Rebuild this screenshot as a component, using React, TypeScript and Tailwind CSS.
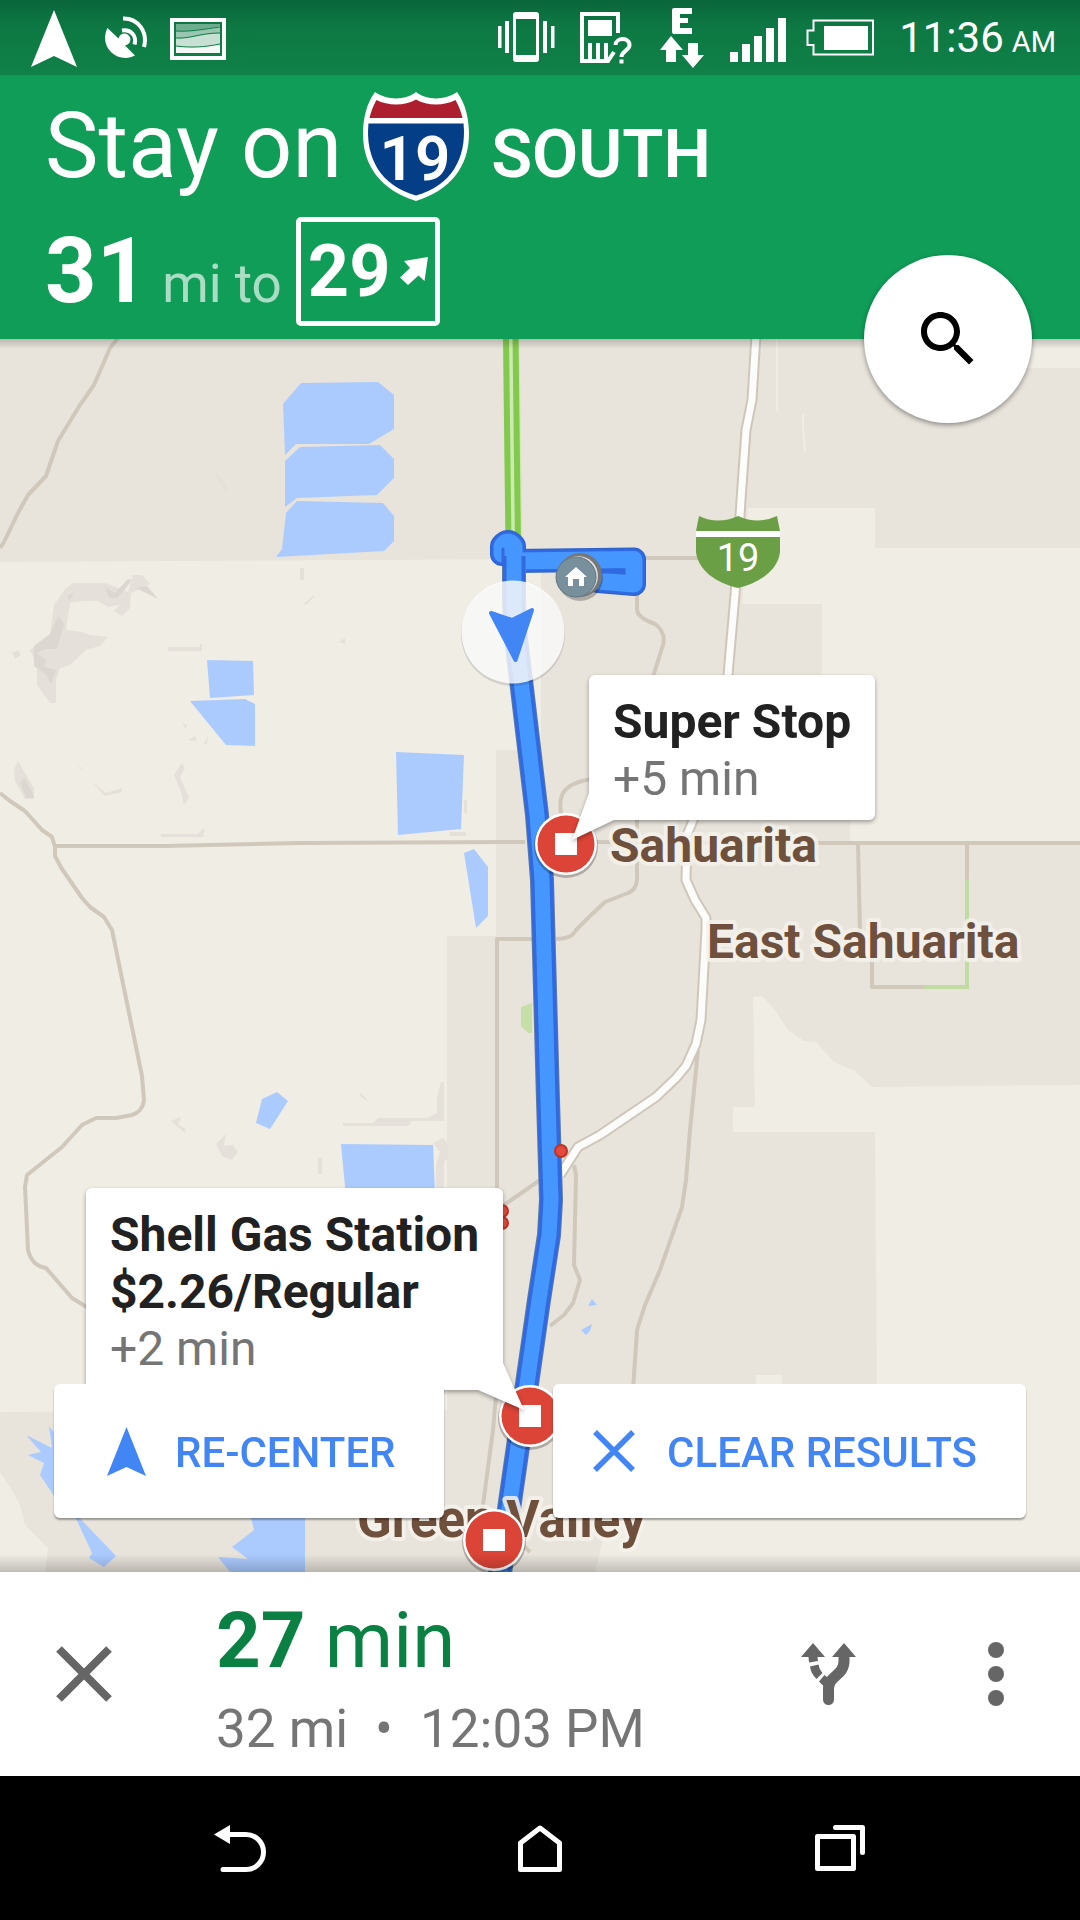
import React from "react";

const MAP_FONT = "Roboto, 'Noto Sans', sans-serif";

function StatusBar() {
  return (
    <div className="flex h-[75px] items-center bg-linear-to-b from-[#0a663b] via-[#0d7843] via-35% to-[#108148] pl-[31px] pr-6 text-white">
      <svg className="h-[75px] w-[46px]" viewBox="31 0 46 75" fill="currentColor" aria-hidden="true">
        <path d="M54 10 77 67 54 56 31 67Z" />
      </svg>
      <svg className="ml-7 h-[75px] w-[42px]" viewBox="105 0 42 75" aria-hidden="true">
        <path d="M107.500 28C103 37 105 46 111 52 117 58 127 60 135 55.500L125 45.500A6 6 0 1 0 118.500 38.500Z" fill="currentColor" />
        <path d="M122 30.500C131 29 137 36 134.500 44.500" fill="none" stroke="currentColor" strokeWidth="4" />
        <path d="M123 18.500C138 18 148 32 144 47" fill="none" stroke="currentColor" strokeWidth="4" />
      </svg>
      <svg className="ml-[23px] h-[75px] w-14" viewBox="170 0 56 75" aria-hidden="true">
        <rect x="172" y="20" width="52" height="38" fill="none" stroke="#fff" strokeWidth="4" />
        <path d="M176 24H220V53H176Z" fill="#fff" fillOpacity=".4" />
        <path d="M176 31C190 32 205 29 220 26V53H176Z" fill="#fff" fillOpacity=".3" />
        <path d="M176 38C190 39 200 34 220 33V53H176Z" fill="#fff" fillOpacity=".45" />
        <path d="M176 46C192 48 205 47 220 44V53H176Z" fill="#fff" fillOpacity=".8" />
        <path d="M176 31C190 32 205 29 220 27M176 38C190 39 200 33 220 33M176 46C192 48 205 47 220 44" fill="none" stroke="#0e7c45" strokeWidth="1" />
      </svg>
      <div className="min-w-4 flex-1" />
      <svg className="h-[75px] w-[57px]" viewBox="498 0 57 75" fill="currentColor" aria-hidden="true">
        <path d="M498 26h3.500v22H498zM505 21h4v32h-4zM543 21h4v32h-4zM551 26h3.500v22H551z" />
        <path fillRule="evenodd" d="M516 12h20a3 3 0 0 1 3 3v44a3 3 0 0 1-3 3h-20a3 3 0 0 1-3-3V15a3 3 0 0 1 3-3zm0 7v36h20V19z" />
      </svg>
      <svg className="ml-[25px] h-[75px] w-[52px]" viewBox="580 0 52 75" aria-hidden="true">
        <path d="M618 33V14H582V61H608L614 52" fill="none" stroke="#fff" strokeWidth="4" />
        <path d="M588 20h24v16h-24zM588 43h4v17h-4zM596 43h4v17h-4zM604 43h4v17h-4z" fill="#fff" />
        <path d="M615.500 45C616 37 630 37 629.500 45.500 629 50.500 621.500 51 621.500 57" fill="none" stroke="#fff" strokeWidth="4" />
        <path d="M619.500 59.500h4v4h-4z" fill="#fff" />
      </svg>
      <svg className="ml-7 h-[75px] w-11" viewBox="660 0 44 75" fill="currentColor" aria-hidden="true">
        <path d="M674 8h18v6h-12v4h8v5h-8v5h12v6h-18a2 2 0 0 1-2-2V10a2 2 0 0 1 2-2z" />
        <path d="M671 36 683 50H676V62H666V50H660ZM688 43H698V55H704L693 68 682 55H688Z" />
      </svg>
      <svg className="ml-[26px] h-[75px] w-14" viewBox="730 0 56 75" fill="currentColor" aria-hidden="true">
        <path d="M730 52h8v10h-8zM742 44h8v18h-8zM754 36h8v26h-8zM766 28h8v34h-8zM778 18h8v44h-8z" />
      </svg>
      <svg className="ml-5 h-[75px] w-[68px]" viewBox="806 0 68 75" aria-hidden="true">
        <path d="M813.500 20.500H873V54.500H813.500V45H807.500V30.500H813.500Z" fill="none" stroke="#fff" strokeWidth="2" />
        <path d="M824 26h44v24h-44z" fill="#fff" />
      </svg>
      <div className="ml-[25px] flex items-baseline gap-2 pt-1 leading-[50px]">
        <span className="text-[42px]">11:36</span>
        <span className="text-[29px]">AM</span>
      </div>
    </div>
  );
}

function InterstateShield() {
  return (
    <svg className="ml-[21px] h-[109px] w-[106px] self-start" viewBox="0 0 106 109" role="img" aria-label="Interstate 19">
      <path d="M12 0C23 8 42 9 53 0 64 9 83 8 94 0 103 12 106 28 106 42 106 74 88 98 53 109 18 98 0 74 0 42 0 28 3 12 12 0Z" fill="#fff" />
      <path d="M13.500 8C25 14 42 14 53 7.500 64 14 81 14 92.500 8 96 14 98 20 99.500 26H6.500C8 20 10 14 13.500 8Z" fill="#ad1f2e" />
      <path d="M5.500 31.500H100.500C104 66 88 94 53 103.500 18 94 2 66 5.500 31.500Z" fill="#033e86" />
      <text x="52" y="88" textAnchor="middle" fontFamily={MAP_FONT} fontSize="62" fontWeight="600" fill="#fff">19</text>
    </svg>
  );
}

function Directions() {
  return (
    <header className="relative bg-[#0f9d58] pb-[13px] pl-[45px] pr-56 pt-[17px] text-white">
      <div className="flex h-[109px] items-baseline whitespace-nowrap leading-[109px]">
        <h1 className="text-[90px]">Stay on</h1>
        <InterstateShield />
        <span className="ml-[22px] text-[67px] font-semibold">SOUTH</span>
      </div>
      <div className="mt-4 flex h-[109px] items-baseline whitespace-nowrap leading-[109px]">
        <span className="text-[90px] font-bold">31</span>
        <span className="ml-[14px] text-[53px] text-white/65">mi to</span>
        <div className="ml-[14px] flex h-[109px] items-center gap-[10px] self-start rounded-[5px] border-[5px] border-white px-[7px]">
          <span className="text-[72px] font-bold leading-[99px]">29</span>
          <svg className="mb-[2px] h-7 w-7" viewBox="0 0 28 28" fill="currentColor" aria-hidden="true">
            <path d="M28 0 24.500 24 18.500 18.500 8 28 0 20.500 10 11 4 4Z" />
          </svg>
        </div>
      </div>
      <button
        type="button"
        aria-label="Search along route"
        className="absolute -bottom-[84px] right-12 z-20 flex size-[168px] items-center justify-center rounded-full bg-white text-black shadow-[0_2px_5px_rgba(0,0,0,0.4)]"
      >
        <svg className="size-[72px]" viewBox="0 0 24 24" fill="currentColor" aria-hidden="true">
          <path d="M15.5 14h-.79l-.28-.27C15.41 12.59 16 11.11 16 9.5 16 5.91 13.09 3 9.5 3S3 5.91 3 9.5 5.91 16 9.5 16c1.61 0 3.09-.59 4.23-1.57l.27.28v.79l5 4.99L20.49 19l-4.99-5zm-6 0C7.01 14 5 11.99 5 9.5S7.01 5 9.5 5 14 7.01 14 9.5 11.99 14 9.5 14z" />
        </svg>
      </button>
    </header>
  );
}

function StopPin({ x, y }: { x: number; y: number }) {
  return (
    <g>
      <circle cx={x} cy={y + 2} r="32" fill="#000" fillOpacity=".25" />
      <circle cx={x} cy={y} r="31" fill="#fff" />
      <circle cx={x} cy={y} r="28.500" fill="#db4437" />
      <rect x={x - 11} y={y - 11} width="22" height="22" fill="#fff" />
    </g>
  );
}

function PlaceLabel({ x, y, size = 48, children }: { x: number; y: number; size?: number; children: React.ReactNode }) {
  return (
    <text x={x} y={y} fontFamily={MAP_FONT} fontSize={size} fontWeight="700" fill="#6f503c" stroke="#f4f2ec" strokeOpacity=".85" strokeWidth="8" strokeLinejoin="round" paintOrder="stroke">
      {children}
    </text>
  );
}

const ROUTE = "M514 556V600L515 630 521 680 537 815 542 880 548 1100 551 1200 549 1235 539 1300 527 1384 511 1495 499 1580";
const LOOP = "M502 554V546Q508 538 514 546V561L634 559.500V584L598 581";
const WHITE_ROAD = "M756 335 752 400 746 430 741 500 735 595 728 675 710 780 694 818 687 835 686 880 695 900 706 918 706 930 701 1020 696 1044 686 1066 676 1078 656 1097 628 1116 600 1135 578 1147 560 1175";

function MapCanvas() {
  return (
    <svg className="absolute inset-0 h-full w-full" viewBox="0 339 1080 1233" preserveAspectRatio="xMidYMin slice" role="img" aria-label="Map of the route along I-19">
      <rect y="339" width="1080" height="1400" fill="#f0ede5" />
      <g fill="#e8e4dc">
        <path d="M0 339H976V368H1080V548H875V508H748L742 604H822V820H850V843H1080V1085L872 1087 855 1071 834 1062 816 1042 804 1041 788 1030 775 1010 762 996 753 997 755 1107H733V1132H875L877 1390 620 1470 595 1572 595 1740H45V1572L48 1548 25 1525 20 1505Q10 1485 0 1473V1412L447 1410V936H496V750H541V559L0 562Z" />
      </g>
      <path d="M756 1375H782V1400H756Z" fill="#f0ede5" />
      <path d="M777 339V412M803 414V426L805 452" stroke="#efece5" strokeWidth="2" fill="none" />
      <g fill="#e5e0d9">
        <path d="M214 471 227 486 226 493 214 473ZM300 568H304V580H300ZM304 604 314 595 313 598 306 605ZM168 647H200V644H202V651H168ZM339 642 345 638V644ZM12 653 18 650 21 655 15 659ZM73 583H105L128 592 133 575H142L150 584 131 593 130 608 122 616 114 611 120 605 108 607 98 601H84L70 603 66 630 82 632 90 635 108 637 100 646 86 650 70 665 60 668 56 680V703H50L37 685V666L30 650 50 634 54 605 66 588Z" />
        <path d="M18 761 34 788V799H25L15 781 14 770ZM77 763 84 771 81 769ZM92 782 106 793 122 788 122 792 105 796ZM174 775 182 763 185 768 180 777 189 798 184 805 181 792ZM161 834H198L205 827 203 837H161ZM464 800H467V813H464ZM450 832H466V836H450ZM182 722 187 726 186 729ZM188 740 196 736V741ZM204 744 208 736 207 744Z" />
        <path d="M343 1123H373L378 1118H427L437 1113V1098L441 1082H444V1121H412L408 1126H343ZM360 1092 370 1103 361 1097ZM171 1121 181 1117 178 1124 185 1129V1133ZM216 1144 226 1134 224 1146 233 1145 238 1152 232 1160 222 1156ZM318 1158H322V1174H318ZM433 1143 443 1138 448 1144V1158L444 1162V1190H436V1165L440 1152Z" />
      </g>
      <g fill="#dcd7d1">
        <path d="M105 587 115 593 128 579 132 580 121 594 117 598H109ZM136 588 147 586 158 599 148 594ZM58 616 64 624 57 649H45L37 653 46 660 44 667 56 670 51 684 46 674 34 666V646L50 634ZM20 782 25 778 33 794V798H26ZM68 595 74 593 69 601Z" />
      </g>
      <g fill="#abcbff">
        <path d="M283 404 301 383 378 382 394 395V429L369 444H296L285 455ZM285 461 300 447 380 445 394 459V478L377 495 297 498 285 507ZM286 513 297 501 383 503 394 516V541L384 551 276 557 282 549Z" />
        <path d="M207 660 253 661 254 695 210 698ZM190 701 245 699 255 704V746L226 745ZM396 752 464 755 461 829 398 835ZM464 853 474 849 488 867V916L476 928ZM262 1099 277 1092 288 1101 270 1129 256 1123ZM341 1144 433 1145 437 1240H350Z" />
        <path d="M588 1306 592 1299 597 1305ZM581 1330 592 1324 590 1331 586 1335ZM26 1435 52 1448 49 1426 60 1440V1505L40 1475 44 1463 28 1455 41 1452ZM72 1510 116 1556 104 1567 89 1558 92 1553ZM249 1510H305V1740H250L230 1572 218 1557 248 1559 232 1547 254 1530Z" />
      </g>
      <path d="M521 1007 532 1003V1033H528L521 1026Z" fill="#c5dfa6" />
      <g fill="none" stroke="#d0c8bb" strokeWidth="4" strokeLinejoin="round">
        <path d="M118 338 110 348 94 385 80 405 58 441 46 476 28 495 18 513 4 542 0 548" />
        <path d="M0 793 10 801 25 811 42 830 52 837 55 847V856L62 869 82 898 90 907 104 917 112 930 142 1076 144 1101Q142 1112 132 1115L116 1118H96L82 1125 62 1147 27 1175 25 1187 28 1250Q32 1266 46 1268L72 1298 90 1309" />
        <path d="M55 846H165L300 843 525 842M590 842 830 843H1080" />
        <path d="M535 939H497V1384L493 1430 481 1520M540 1180 504 1205" />
        <path d="M640 558H705M637 590V610Q638 618 655 624 666 632 663 645L652 680M562 818C558 800 558 784 592 779M637 815V880Q636 890 628 893L605 902 590 916 576 930Q572 939 556 939" />
        <path d="M858 843 860 935 872 942V987H967V843M698 1050 690 1130 686 1180 682 1207 660 1270 645 1305 637 1330 633 1390M574 1165 576 1175 574 1265 580 1280 573 1303 564 1315 550 1326M523 1545 530 1552" />
      </g>
      <path d="M967 879V987H924" fill="none" stroke="#c2dba3" strokeWidth="4" />
      <path d={WHITE_ROAD} fill="none" stroke="#cec6b9" strokeWidth="11" strokeLinejoin="round" />
      <path d={WHITE_ROAD} fill="none" stroke="#fcfcfb" strokeWidth="7" strokeLinejoin="round" />
      <path d="M511 336 514 545" stroke="#cdebb0" strokeWidth="17" />
      <path d="M506 336 508.500 545M515.500 336 518 545" stroke="#84c94f" strokeWidth="6" />

      <g fill="none" strokeLinejoin="round" strokeLinecap="round">
        <path d={LOOP} stroke="#2b62c9" strokeWidth="24" />
        <path d={LOOP} stroke="#3069e0" strokeWidth="22" />
        <path d={LOOP} stroke="#4596ff" strokeWidth="17" />
        <path d={ROUTE} stroke="#5d7ba0" strokeWidth="24" strokeLinecap="butt" />
        <path d={ROUTE} stroke="#3069e0" strokeWidth="22" strokeLinecap="butt" />
        <path d={ROUTE} stroke="#4596ff" strokeWidth="15" />
        <path d="M503 549V565M600 572 622 571.500" stroke="#3069e0" strokeWidth="3" />
      </g>

      <g>
        <circle cx="580" cy="578" r="23" fill="#000" fillOpacity=".25" />
        <circle cx="580" cy="575" r="22" fill="#777" />
        <circle cx="578" cy="576" r="20" fill="#dcdcdc" />
        <circle cx="576" cy="577" r="20" fill="#78909c" stroke="#5f7580" strokeWidth="1" />
        <path d="M576 567 587 577H584V586H579V579H573V586H568V577H565Z" fill="#fff" />
      </g>

      <g>
        <circle cx="513" cy="634" r="52" fill="#000" fillOpacity=".12" />
        <circle cx="513" cy="632" r="51.500" fill="#fff" fillOpacity=".82" />
        <path d="M491 613 512 620 532 610 515.500 660Z" fill="#4285f4" stroke="#4285f4" strokeWidth="4" strokeLinejoin="round" />
      </g>

      <g>
        <path d="M699 516Q718 525 738 516 758 525 777 516L780 531V552C778 570 760 583 738 588 716 583 698 570 696 552V531Z" fill="#6b9f45" />
        <path d="M696 531H780V537H696Z" fill="#fff" />
        <text x="738" y="571" textAnchor="middle" fontFamily={MAP_FONT} fontSize="38" fill="#fff">19</text>
      </g>

      <PlaceLabel x={610} y={862}>Sahuarita</PlaceLabel>
      <PlaceLabel x={707} y={958}>East Sahuarita</PlaceLabel>
      <PlaceLabel x={357} y={1537} size={51}>Green Valley</PlaceLabel>

      <g fill="#e34a3d" stroke="#b93328" strokeWidth="2">
        <circle cx="561" cy="1151" r="6" />
        <circle cx="502" cy="1211" r="6" />
        <circle cx="502" cy="1223" r="6" />
      </g>
      <StopPin x={566} y={844} />
      <StopPin x={530} y={1416} />
      <StopPin x={494} y={1540} />
    </svg>
  );
}

function Callout({ className, lines, extra, tail }: { className: string; lines: string[]; extra: string; tail: React.ReactNode }) {
  return (
    <button
      type="button"
      className={`absolute whitespace-nowrap rounded-[6px] bg-white px-6 pb-[13px] pt-[18px] text-left text-[48px] leading-[57px] drop-shadow-[0_2px_2px_rgba(0,0,0,0.35)] ${className}`}
    >
      {lines.map((line) => (
        <span key={line} className="block font-bold text-[#212121]">{line}</span>
      ))}
      <span className="block text-[#757575]">{extra}</span>
      {tail}
    </button>
  );
}

function MapArea() {
  return (
    <main className="relative min-h-[1233px] flex-1 overflow-hidden">
      <MapCanvas />
      <div className="absolute inset-x-0 top-0 h-[10px] bg-linear-to-b from-black/20 to-transparent" />
      <div className="absolute inset-x-0 bottom-0 h-[18px] bg-linear-to-t from-black/20 to-transparent" />
      <Callout
        className="left-[589px] top-[336px]"
        lines={["Super Stop"]}
        extra="+5 min"
        tail={
          <svg className="absolute -bottom-[21px] -left-[17px] h-12 w-11" viewBox="0 0 44 48" fill="#fff" aria-hidden="true">
            <path d="M17 0 0 47 42 27V0Z" />
          </svg>
        }
      />
      <Callout
        className="left-[86px] top-[849px]"
        lines={["Shell Gas Station", "$2.26/Regular"]}
        extra="+2 min"
        tail={
          <svg className="absolute -bottom-[21px] -right-[21px] h-12 w-[46px]" viewBox="0 0 46 48" fill="#fff" aria-hidden="true">
            <path d="M25 0 46 47 0 27V0Z" />
          </svg>
        }
      />
      <div className="absolute inset-x-[54px] bottom-[54px] flex justify-between text-[42px] font-medium leading-[50px] text-[#4285f4]">
        <button type="button" className="flex h-[134px] items-center gap-[29px] rounded-[6px] bg-white pl-[53px] pr-12 shadow-[0_2px_2px_rgba(0,0,0,0.35)]">
          <svg className="h-[49px] w-[39px]" viewBox="0 0 39 49" fill="currentColor" aria-hidden="true">
            <path d="M19.500 0 39 49 19.500 40 0 49Z" />
          </svg>
          <span className="pt-[3px]">RE-CENTER</span>
        </button>
        <button type="button" className="flex h-[134px] items-center gap-8 rounded-[6px] bg-white pl-10 pr-[49px] shadow-[0_2px_2px_rgba(0,0,0,0.35)]">
          <svg className="size-[42px]" viewBox="0 0 42 42" stroke="currentColor" strokeWidth="5.500" aria-hidden="true">
            <path d="M2 2 40 40M40 2 2 40" />
          </svg>
          <span className="pt-[3px]">CLEAR RESULTS</span>
        </button>
      </div>
    </main>
  );
}

function TripBar() {
  return (
    <section className="flex items-center bg-white px-9 pb-[7px] pt-[21px] text-[#666]">
      <button type="button" aria-label="End trip" className="-mt-[14px] flex size-24 items-center justify-center">
        <svg className="size-14" viewBox="0 0 56 56" stroke="currentColor" strokeWidth="8" aria-hidden="true">
          <path d="M3 3 53 53M53 3 3 53" />
        </svg>
      </button>
      <div className="ml-[84px] flex-1 whitespace-nowrap">
        <p className="text-[78px] leading-[96px] text-[#0b8043]">
          <span className="font-bold">27</span> min
        </p>
        <p className="flex text-[53px] leading-[80px] text-[#757575]">
          <span>32 mi</span>
          <span className="mx-[27px]">•</span>
          <span>12:03 PM</span>
        </p>
      </div>
      <button type="button" aria-label="Alternate routes" className="-mt-[14px] flex size-24 items-center justify-center">
        <svg className="h-[62px] w-14" viewBox="0 0 56 62" aria-hidden="true">
          <path d="M12 0 24 14H16.500L17 18 8 19.500 7.500 14H0ZM43 0 55 14H31ZM9 23.500 17.500 21.500Q18 26 21.500 30L15.500 36Q10 31 9 23.500ZM23.500 32 27 35V46L22.500 43 18 38.500Z" fill="currentColor" />
          <path d="M43 12V18C43 33 27.500 32 27.500 46V56.500" fill="none" stroke="currentColor" strokeWidth="11" />
          <circle cx="27.500" cy="56.500" r="5.500" fill="currentColor" />
        </svg>
      </button>
      <button type="button" aria-label="More options" className="-mt-[14px] ml-[71px] flex size-24 items-center justify-center">
        <svg className="h-16 w-4" viewBox="0 0 16 64" fill="currentColor" aria-hidden="true">
          <circle cx="8" cy="8" r="8" />
          <circle cx="8" cy="32" r="8" />
          <circle cx="8" cy="56" r="8" />
        </svg>
      </button>
    </section>
  );
}

function NavBar() {
  const button = "flex h-36 items-center justify-center";
  return (
    <nav className="grid grid-cols-3 bg-black px-[90px] text-white">
      <button type="button" aria-label="Back" className={button}>
        <svg className="h-[47px] w-[52px]" viewBox="0 0 52 47" fill="none" stroke="currentColor" strokeWidth="5" strokeLinecap="round" aria-hidden="true">
          <path d="M14 9.500H32A17.500 17.500 0 0 1 32 44.500H9" />
          <path d="M16 0V19L0 9.500Z" fill="currentColor" stroke="none" />
        </svg>
      </button>
      <button type="button" aria-label="Home" className={button}>
        <svg className="h-[47px] w-11" viewBox="0 0 44 47" fill="none" stroke="currentColor" strokeWidth="5" strokeLinejoin="round" aria-hidden="true">
          <path d="M2.500 44.500V18L22 3 41.500 18V44.500Z" />
        </svg>
      </button>
      <button type="button" aria-label="Recent apps" className={button}>
        <svg className="h-[46px] w-[50px]" viewBox="0 0 50 46" fill="none" stroke="currentColor" strokeWidth="5" strokeLinejoin="round" strokeLinecap="round" aria-hidden="true">
          <path d="M2.500 11.500H38.500V43.500H2.500ZM20.500 2.500H47.500V27.500" />
        </svg>
      </button>
    </nav>
  );
}

export default function App() {
  return (
    <div className="flex min-h-screen flex-col bg-black font-[Roboto,'Noto_Sans',sans-serif]">
      <StatusBar />
      <Directions />
      <MapArea />
      <TripBar />
      <NavBar />
    </div>
  );
}
